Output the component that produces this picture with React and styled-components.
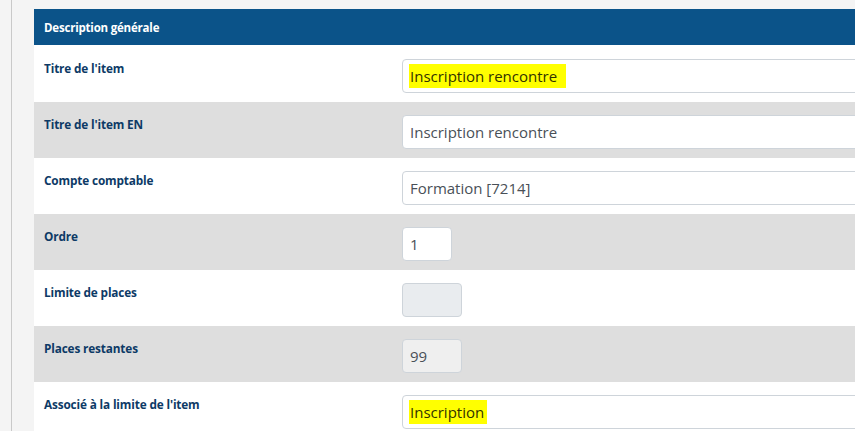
import React from "react";
import styled, { createGlobalStyle } from "styled-components";

const Global = createGlobalStyle`
  html, body { margin: 0; padding: 0; overflow: hidden; background: #f4f4f4; }
  body { font-family: "Open Sans", "Noto Sans", sans-serif; }
`;

const Page = styled.div`
  padding-left: 11px;
  height: 431px;
  overflow: hidden;
`;

const Frame = styled.div`
  border-left: 1px solid #c9c9c9;
  height: 100%;
  padding: 9px 0 0 22px;
  box-sizing: border-box;
  overflow: hidden;
`;

const Card = styled.section`
  background: #ffffff;
  width: 100%;
  overflow: hidden;
`;

const Header = styled.div`
  height: 36px;
  background: #0b5389;
  color: #ffffff;
  font-weight: 700;
  font-size: 11.5px;
  display: flex;
  align-items: center;
  padding-left: 10px;
  letter-spacing: -0.2px;
`;

const Row = styled.div`
  display: grid;
  grid-template-columns: 368px 1fr;
  height: ${(p) => p.$h || 56}px;
  box-sizing: border-box;
  background: ${(p) => (p.$alt ? "#dedede" : "#ffffff")};
  padding-top: ${(p) => p.$pt || 13}px;
`;

const Label = styled.div`
  padding: 1px 0 0 10px;
  color: #0d3a66;
  font-weight: 700;
  font-size: 11.8px;
  letter-spacing: -0.15px;
`;

const Field = styled.div`
  box-sizing: border-box;
  height: 34px;
  width: ${(p) => (p.$w ? `${p.$w}px` : "calc(100% + 40px)")};
  border: 1px solid #ced4da;
  border-radius: 4px;
  background: ${(p) => p.$bg || "#ffffff"};
  color: #495057;
  font-size: 15px;
  display: flex;
  align-items: center;
  padding-left: 7px;
  white-space: nowrap;
`;

const Mark = styled.span`
  background: #ffff00;
  color: #333300;
  padding: 2px ${(p) => p.$pr || 2}px 2px 1px;
  margin-left: -1px;
`;

const rows = [
  { label: "Titre de l'item", value: "Inscription rencontre", mark: true, pr: 9 },
  { label: "Titre de l'item EN", value: "Inscription rencontre" },
  { label: "Compte comptable", value: "Formation [7214]" },
  { label: "Ordre", value: "1", w: 50 },
  { label: "Limite de places", value: "", w: 60, bg: "#e9ecef" },
  { label: "Places restantes", value: "99", w: 60, bg: "#efefef" },
  { label: "Associé à la limite de l'item", value: "Inscription", mark: true, pr: 3 },
];

export default function App() {
  return (
    <>
      <Global />
      <Page>
        <Frame>
          <Card>
            <Header>Description générale</Header>
            {rows.map((r, i) => (
              <Row key={i} $alt={i % 2 === 1} $h={i === 0 ? 57 : 56} $pt={i === 0 ? 14 : 13}>
                <Label>{r.label}</Label>
                <div>
                  <Field $w={r.w} $bg={r.bg}>
                    {r.mark ? <Mark $pr={r.pr}>{r.value}</Mark> : r.value}
                  </Field>
                </div>
              </Row>
            ))}
          </Card>
        </Frame>
      </Page>
    </>
  );
}
